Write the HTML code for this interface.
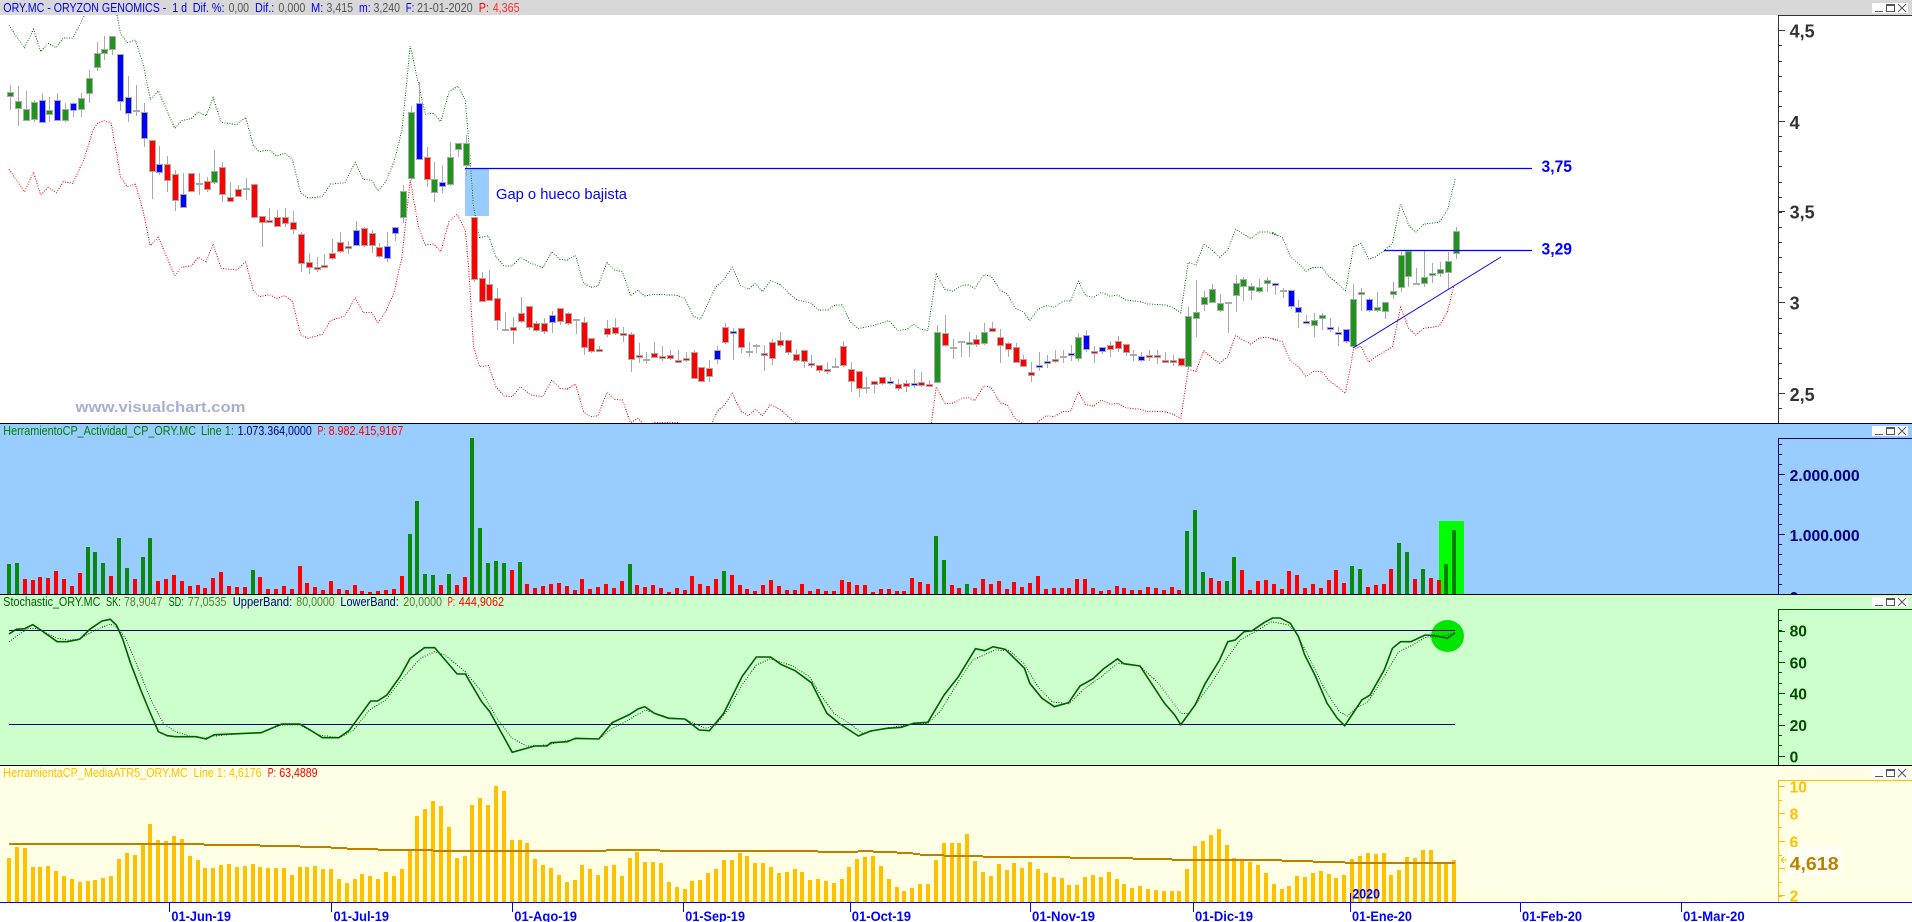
<!DOCTYPE html>
<html lang="es">
<head>
<meta charset="utf-8">
<title>ORY.MC - ORYZON GENOMICS</title>
<style>
html,body{margin:0;padding:0;background:#fff;width:1912px;height:922px;overflow:hidden}
svg{position:absolute;left:0;top:0;display:block}
text{font-family:"Liberation Sans",Arial,sans-serif;white-space:pre}
.t{font-size:12.5px}
.ax{font-weight:bold;font-size:18px}
.ax2{font-weight:bold;font-size:15.6px}
.d{font-weight:bold;font-size:13.5px;fill:#0000ff}
</style>
</head>
<body>
<svg xmlns="http://www.w3.org/2000/svg" width="1912" height="922" viewBox="0 0 1912 922">
<defs>
<clipPath id="c1"><rect x="0" y="15" width="1778" height="408"/></clipPath>
<clipPath id="c2"><rect x="0" y="424" width="1912" height="170"/></clipPath>
</defs>
<!-- backgrounds -->
<rect x="0" y="0" width="1912" height="15" fill="#d8d8d8"/>
<rect x="0" y="15" width="1912" height="408" fill="#ffffff"/>
<rect x="0" y="424" width="1912" height="170" fill="#99ccff"/>
<rect x="0" y="595" width="1912" height="170" fill="#ccffcc"/>
<rect x="0" y="766" width="1912" height="136" fill="#ffffe6"/>
<rect x="0" y="903" width="1912" height="19" fill="#ffffff"/>

<!-- price panel drawings -->
<rect x="465" y="168" width="24" height="48" fill="#99ccff"/>
<g id="bands" clip-path="url(#c1)" shape-rendering="crispEdges"></g>
<g id="candles" clip-path="url(#c1)" shape-rendering="crispEdges"></g>
<line x1="465" y1="168.5" x2="1532" y2="168.5" stroke="#0000ff" stroke-width="1.2"/>
<line x1="1384" y1="250.5" x2="1532" y2="250.5" stroke="#0000ff" stroke-width="1.2"/>
<line x1="1353" y1="348" x2="1501" y2="257" stroke="#0000ff" stroke-width="1"/>
<text x="496" y="199" font-size="15" fill="#0000ff" textLength="131" lengthAdjust="spacingAndGlyphs">Gap o hueco bajista</text>
<text x="1541.5" y="172" font-size="16.5" font-weight="bold" fill="#0000ff" textLength="30.5" lengthAdjust="spacingAndGlyphs">3,75</text>
<text x="1541.5" y="254.5" font-size="16.5" font-weight="bold" fill="#0000ff" textLength="30.5" lengthAdjust="spacingAndGlyphs">3,29</text>
<text x="75.5" y="412" font-size="15" font-weight="bold" fill="#a9aed2" textLength="170" lengthAdjust="spacingAndGlyphs">www.visualchart.com</text>

<!-- panel 2 / 3 / 4 drawings -->
<rect x="1439" y="521" width="25" height="73" fill="#00ff00"/>
<g id="vol" shape-rendering="crispEdges" clip-path="url(#c2)"></g>
<ellipse cx="1447.5" cy="636" rx="16.5" ry="16" fill="#00e600"/>
<line x1="9" y1="630.5" x2="1455" y2="630.5" stroke="#000080" stroke-width="1"/>
<line x1="9" y1="724.5" x2="1455" y2="724.5" stroke="#000080" stroke-width="1"/>
<g id="stoch"></g>
<g id="atr" shape-rendering="crispEdges"></g>

<!-- separators -->
<g shape-rendering="crispEdges">
<rect x="0" y="423" width="1912" height="1" fill="#000"/>
<rect x="0" y="594" width="1912" height="1" fill="#000"/>
<rect x="0" y="765" width="1912" height="1" fill="#000"/>
<rect x="0" y="902" width="1912" height="1" fill="#0000ff"/>
</g>

<!-- axes -->
<g id="axes" shape-rendering="crispEdges"></g>
<g class="ax" fill="#333333">
<text x="1789.6" y="37.7">4,5</text>
<text x="1789.6" y="129">4</text>
<text x="1789.6" y="218.5">3,5</text>
<text x="1789.6" y="309.7">3</text>
<text x="1789.6" y="401">2,5</text>
</g>
<g class="ax2" fill="#000080" clip-path="url(#c2)">
<text x="1789.6" y="481" textLength="70" lengthAdjust="spacingAndGlyphs">2.000.000</text>
<text x="1789.6" y="541" textLength="70" lengthAdjust="spacingAndGlyphs">1.000.000</text>
<text x="1789.6" y="603">0</text>
</g>
<g class="ax2" fill="#004d00">
<text x="1789.6" y="636.7">80</text>
<text x="1789.6" y="668.3">60</text>
<text x="1789.6" y="699.3">40</text>
<text x="1789.6" y="731">20</text>
<text x="1789.6" y="762.7">0</text>
</g>
<rect x="1779" y="766" width="133" height="14" fill="#ffffe6"/>
<g class="ax2" fill="#ffc000">
<text x="1789.6" y="792.3">10</text>
<text x="1789.6" y="819.3">8</text>
<text x="1789.6" y="847.3">6</text>
<text x="1789.6" y="901.7">2</text>
</g>
<rect x="1788" y="847" width="55" height="28" fill="#fffff6"/>
<text x="1789.6" y="870" class="ax" fill="#bf8000" textLength="49" lengthAdjust="spacingAndGlyphs">4,618</text>
<path d="M1787 860H1781M1784 857L1781 860L1784 863" stroke="#ffc000" fill="none" stroke-width="1"/>

<!-- titles -->
<g class="t" fill="#0000ff">
<text x="3.3" y="12" textLength="183.7" lengthAdjust="spacingAndGlyphs">ORY.MC - ORYZON GENOMICS -  1 d</text>
<text x="192.7" y="12" textLength="31.8" lengthAdjust="spacingAndGlyphs">Dif. %:</text>
<text x="228.6" y="12" textLength="20.4" lengthAdjust="spacingAndGlyphs" fill="#555555">0,00</text>
<text x="255" y="12" textLength="19.3" lengthAdjust="spacingAndGlyphs">Dif.:</text>
<text x="278.4" y="12" textLength="26.9" lengthAdjust="spacingAndGlyphs" fill="#555555">0,000</text>
<text x="311" y="12" textLength="12.3" lengthAdjust="spacingAndGlyphs">M:</text>
<text x="326.5" y="12" textLength="26.5" lengthAdjust="spacingAndGlyphs" fill="#555555">3,415</text>
<text x="359" y="12" textLength="11.6" lengthAdjust="spacingAndGlyphs">m:</text>
<text x="373.5" y="12" textLength="26.5" lengthAdjust="spacingAndGlyphs" fill="#555555">3,240</text>
<text x="405.7" y="12" textLength="8.6" lengthAdjust="spacingAndGlyphs">F:</text>
<text x="417" y="12" textLength="55.7" lengthAdjust="spacingAndGlyphs" fill="#555555">21-01-2020</text>
<text x="478.8" y="12" textLength="10.2" lengthAdjust="spacingAndGlyphs" fill="#ff0000">P:</text>
<text x="492.7" y="12" textLength="26.9" lengthAdjust="spacingAndGlyphs" fill="#ff3030">4,365</text>
</g>
<g class="t">
<text x="3.3" y="435" textLength="192.7" lengthAdjust="spacingAndGlyphs" fill="#008000">HerramientoCP_Actividad_CP_ORY.MC</text>
<text x="201" y="435" textLength="32.9" lengthAdjust="spacingAndGlyphs" fill="#008000">Line 1:</text>
<text x="237.6" y="435" textLength="74.2" lengthAdjust="spacingAndGlyphs" fill="#000080">1.073.364,0000</text>
<text x="317.6" y="435" textLength="8.1" lengthAdjust="spacingAndGlyphs" fill="#ff0000">P:</text>
<text x="328.6" y="435" textLength="74.7" lengthAdjust="spacingAndGlyphs" fill="#ff0000">8.982.415,9167</text>

<text x="3.3" y="606" textLength="97.1" lengthAdjust="spacingAndGlyphs" fill="#005f00">Stochastic_ORY.MC</text>
<text x="106" y="606" textLength="14.8" lengthAdjust="spacingAndGlyphs" fill="#005f00">SK:</text>
<text x="124" y="606" textLength="38.4" lengthAdjust="spacingAndGlyphs" fill="#557f33">78,9047</text>
<text x="168.6" y="606" textLength="15.1" lengthAdjust="spacingAndGlyphs" fill="#005f00">SD:</text>
<text x="187.8" y="606" textLength="38.7" lengthAdjust="spacingAndGlyphs" fill="#557f33">77,0535</text>
<text x="232.7" y="606" textLength="59.5" lengthAdjust="spacingAndGlyphs" fill="#000080">UpperBand:</text>
<text x="296.3" y="606" textLength="38.4" lengthAdjust="spacingAndGlyphs" fill="#557f33">80,0000</text>
<text x="340.4" y="606" textLength="58.4" lengthAdjust="spacingAndGlyphs" fill="#000080">LowerBand:</text>
<text x="403.3" y="606" textLength="38.7" lengthAdjust="spacingAndGlyphs" fill="#557f33">20,0000</text>
<text x="447.8" y="606" textLength="7.2" lengthAdjust="spacingAndGlyphs" fill="#ff0000">P:</text>
<text x="458.8" y="606" textLength="45.2" lengthAdjust="spacingAndGlyphs" fill="#ff0000">444,9062</text>

<text x="3.3" y="777" textLength="184.5" lengthAdjust="spacingAndGlyphs" fill="#ffc000">HerramientaCP_MediaATR5_ORY.MC</text>
<text x="193.5" y="777" textLength="32.2" lengthAdjust="spacingAndGlyphs" fill="#ffc000">Line 1:</text>
<text x="229" y="777" textLength="32.6" lengthAdjust="spacingAndGlyphs" fill="#ffc000">4,6176</text>
<text x="267.8" y="777" textLength="8.2" lengthAdjust="spacingAndGlyphs" fill="#ff0000">P:</text>
<text x="279.2" y="777" textLength="38.4" lengthAdjust="spacingAndGlyphs" fill="#ff0000">63,4889</text>
</g>

<!-- date axis -->
<g class="d">
<text x="171.4" y="921" textLength="59.6" lengthAdjust="spacingAndGlyphs">01-Jun-19</text>
<text x="333.5" y="921" textLength="55.5" lengthAdjust="spacingAndGlyphs">01-Jul-19</text>
<text x="514.3" y="921" textLength="62.7" lengthAdjust="spacingAndGlyphs">01-Ago-19</text>
<text x="685.3" y="921" textLength="59.7" lengthAdjust="spacingAndGlyphs">01-Sep-19</text>
<text x="851.8" y="921" textLength="59.2" lengthAdjust="spacingAndGlyphs">01-Oct-19</text>
<text x="1032" y="921" textLength="63" lengthAdjust="spacingAndGlyphs">01-Nov-19</text>
<text x="1195" y="921" textLength="58" lengthAdjust="spacingAndGlyphs">01-Dic-19</text>
<text x="1352" y="921" textLength="60" lengthAdjust="spacingAndGlyphs">01-Ene-20</text>
<text x="1522" y="921" textLength="60" lengthAdjust="spacingAndGlyphs">01-Feb-20</text>
<text x="1683" y="921" textLength="61.7" lengthAdjust="spacingAndGlyphs">01-Mar-20</text>
<text x="1352.4" y="898.5" textLength="27.6" lengthAdjust="spacingAndGlyphs">2020</text>
</g>
<g id="dt" shape-rendering="crispEdges"></g>
<g id="btn"></g>
</svg>

<script>
(function(){
var F=2.45,DX=7.855;
function $(i){return document.getElementById(i);}
function put(id,s){
  var tmp=document.createElementNS("http://www.w3.org/2000/svg","g");
  tmp.innerHTML=s; var g=$(id);
  while(tmp.firstChild) g.appendChild(tmp.firstChild);
}
function R(x,y,w,h,c){return '<rect x="'+x+'" y="'+y+'" width="'+w+'" height="'+h+'" fill="'+c+'"/>';}

/* candles: colour,top,bottom,high,low in zoomed y (÷3); d = doji: y,high,low */
var C="g275,292,255,330;g302,327,258,378;g328,363,272,363;g305,360,300,365;b299,369,280,369;g330,345,292,365;b299,363,280,363;g328,363,308,365;b310,333,305,350;g293,331,280,350;g235,281,210,308;g160,205,125,212;g146,163,108,180;g109,151,109,165;b163,306,163,332;b290,342,228,366;d333,255,347;b335,418,310,440;r419,517,419,597;b493,520,437,525;r493,544,468,575;r521,604,510,632;b581,625,520,625;r520,577,520,577;d553,520,585;r544,571,530,575;g512,550,450,552;r500,586,487,605;r590,607,545,607;r566,592,555,592;d566,535,600;r553,655,553,655;r647,670,647,742;r659,667,625,670;r650,681,630,681;r650,673,625,680;r665,691,633,703;r703,793,697,815;r787,805,760,822;r800,805,770,815;r794,802,762,805;r758,778,718,780;r727,757,697,760;r737,742,722,762;b691,737,663,737;r683,739,680,740;r698,739,690,760;r742,772,730,775;b739,778,697,785;b681,703,681,722;g574,655,555,668;g335,538,318,540;b308,480,247,480;r470,540,440,560;g536,580,487,605;b545,561,495,580;g472,556,425,558;g428,451,428,470;g428,498,405,527;r652,840,652,845;r833,906,815,906;r853,904,810,904;r893,963,865,990;d990,935,990;r980,994,950,1033;r940,966,890,970;r917,985,917,990;r968,993,962,995;r968,996,955,1003;b946,970,932,1000;r923,966,923,975;r940,972,935,975;d960,960,1002;r965,1044,950,1066;r1014,1055,1014,1060;r1047,1054,1038,1057;r983,1005,960,1012;r981,1002,953,1005;r998,1005,980,1025;r1002,1080,995,1117;r1065,1072,1030,1090;"+
"d1080,1055,1092;r1058,1075,1026,1075;r1067,1074,1038,1082;r1064,1078,1050,1080;r1079,1084,1050,1085;r1073,1084,1055,1085;r1057,1138,1050,1138;r1100,1147,1100,1147;r1103,1132,1080,1145;b1051,1079,1038,1092;r980,1028,968,1032;b992,997,985,1079;r983,1045,983,1060;d1056,1025,1070;d1039,1032,1058;r1058,1063,1035,1112;r1027,1078,1018,1095;r1019,1039,995,1040;r1019,1060,1019,1065;r1061,1084,1047,1085;r1049,1087,1049,1103;r1090,1099,1065,1104;r1094,1114,1094,1118;r1108,1114,1085,1122;d1100,1075,1105;r1037,1098,1023,1100;r1108,1147,1085,1175;r1112,1167,1112,1190;d1165,1130,1178;r1142,1156,1142,1178;r1130,1152,1130,1155;b1142,1150,1130,1155;r1152,1167,1137,1172;r1148,1161,1140,1175;b1148,1158,1106,1165;r1145,1158,1115,1160;r1153,1158,1140,1162;g995,1150,975,1150;r998,1039,945,1040;d1043,1018,1076;d1027,1022,1070;g1025,1030,995,1070;r1018,1036,1005,1042;g995,1033,970,1035;r983,996,965,996;r1012,1039,988,1090;r1030,1050,1025,1070;r1040,1089,1028,1090;r1077,1102,1065,1102;r1115,1128,1085,1145;b1094,1102,1055,1112;b1082,1087,1066,1103;r1076,1087,1050,1090;d1070,1050,1088;b1058,1069,1035,1082;g1010,1078,1000,1082;b1004,1051,990,1055;r1052,1057,1038,1090;b1040,1057,1040,1062;r1034,1050,1022,1070;r1022,1048,1008,1055;r1032,1060,1032,1068;d1066,1050,1082;b1068,1084,1056,1085;r1066,1075,1050,1082;r1064,1071,1050,1092;r1079,1087,1056,1087;r1081,1087,1065,1097;r1073,1099,1073,1100;g947,1101,920,1110;g935,958,840,1012;g892,916,873,933;g866,908,852,910;g908,932,882,935;d908,908,998;g848,889,825,935;g836,862,830,903;g857,874,850,900;g860,877,838,878;g839,853,830,876;b848,859,848,885;"+
"d873,865,895;b869,922,869,928;b920,940,900,985;b964,970,945,970;g959,978,940,1010;g944,958,940,990;b980,985,955,995;b997,1003,980,1037;b988,1027,988,1030;g898,1042,852,1045;g877,884,865,932;b898,933,895,935;g922,933,875,935;g905,937,905,956;g874,884,845,898;g766,865,755,875;g752,832,752,860;d852,805,855;g830,853,752,862;g818,826,790,850;g808,822,785,832;g784,820,755,868;g692,762,682,776";
var cols={g:"#1e941e",b:"#0000ff",r:"#ff0000"};
var s='',W='';
C.split(";").forEach(function(e,i){
  var k=e[0],n=e.slice(1).split(",").map(Number);
  var x=Math.round(10.2+DX*i);
  if(k=="d"){
    var y=Math.round(n[0]/3),h=Math.round(n[1]/3),l=Math.round(n[2]/3);
    W+=R(x,h,1,Math.max(l-h,1),"#aaaaaa");
    s+=R(x-3,y-1,7,2,"#aaaaaa");
  }else{
    var t=Math.round(n[0]/3),b=Math.round(n[1]/3),h2=Math.round(n[2]/3),l2=Math.round(n[3]/3);
    if(b-t<3)b=t+3;
    W+=R(x,h2,1,Math.max(l2-h2,1),"#aaaaaa");
    s+=R(x-3,t,7,b-t,"#aaaaaa")+R(x-2,t+1,5,b-t-2,cols[k]);
  }
});
put("candles",W+s);

/* dotted bands */
function pts(off,a,y0){var o=[];for(var i=0;i<a.length;i+=2)o.push((off+a[i]/F).toFixed(1)+","+(y0+a[i+1]/3).toFixed(1));return o.join(" ");}
var gu1=[22,75,40,110,60,143,82,88,100,155,118,130,138,143,155,113,178,115,205,50,225,-10,270,-10,287,45,295,100,312,128,332,120,350,190,368,298,388,273,428,385,445,362,470,355,485,335,505,348,522,293,542,367,580,374,602,352,620,435,635,455,660,450,678,468,697,460,716,476,737,580,755,594,790,590,810,552,845,548,870,487,890,538,910,540,926,572,945,545,965,487,985,390,1005,138,1025,250,1042,342,1062,340,1080,365,1100,275,1122,258,1140,300,1148,420,1160,620,1175,712,1197,708,1215,770,1235,798,1255,798,1275,772,1300,790,1330,803,1352,755,1372,778,1390,780,1410,766,1430,850,1448,862,1465,858,1487,787,1506,810,1525,815,1545,888,1563,870];
var gu2=[0,877,12,888,35,883,60,884,90,886,110,895,130,948,148,958,165,915,185,862,205,840,226,802,247,857,265,868,283,850,300,875,320,842,345,855,365,880,385,900,418,908,437,930,460,930,478,915,495,915,515,965,535,986,570,977,610,962,632,992,655,987,670,973,688,988,705,992,726,823,747,868,765,874,790,856,805,855,820,865,842,825,860,828,882,870,900,882,920,925,940,937,955,962,975,928,995,917,1015,922,1036,904,1055,903,1074,844,1092,887,1112,892,1131,877,1152,889,1170,885,1190,900,1225,905,1245,912,1285,915,1305,922,1325,938,1343,787,1362,796,1381,733,1400,748,1420,772,1440,750,1459,688,1497,716,1516,697,1536,695,1563,708];
var gu3=[0,697,25,712,45,770,65,790,83,814,100,802,122,802,140,830,160,850,180,872,200,740,218,730,237,777,255,770,275,752,295,730,315,612,335,675,352,697,372,672,392,670,410,666,430,630,449,537];
var rd1=[22,508,40,540,60,575,82,517,100,585,118,562,138,578,155,545,178,550,205,480,228,390,240,368,255,362,272,367,287,470,295,530,312,560,332,553,350,630,368,737,388,712,428,827,445,802,470,797,485,772,505,785,522,732,542,805,580,810,602,785,620,870,635,890,660,884,678,895,697,887,716,903,737,1005,755,1015,790,1003,810,962,845,948,870,893,890,938,910,937,926,968,945,935,965,880,985,770,1005,540,1025,680,1042,735,1062,732,1080,755,1100,665,1120,643,1140,690,1148,800,1160,1040,1175,1100,1197,1097,1215,1160,1235,1188,1255,1190,1275,1160,1300,1185,1330,1190,1352,1140,1372,1165,1390,1167,1410,1152,1430,1237,1448,1250,1465,1247,1487,1177,1506,1198,1525,1200,1545,1268,1563,1255];
var rd2=[0,1262,12,1275,35,1268,92,1268,110,1290,160,1290,176,1270,190,1232,205,1218,226,1180,247,1233,265,1247,283,1228,300,1247,320,1213,345,1230,380,1268,400,1295,700,1295,714,1268,726,1160,747,1210,765,1210,790,1195,805,1193,820,1202,842,1158,860,1162,882,1208,900,1215,920,1258,940,1270,955,1295,970,1270,995,1247,1015,1250,1036,1234,1055,1234,1074,1175,1092,1215,1112,1218,1131,1200,1152,1213,1170,1210,1190,1223,1225,1228,1245,1235,1285,1235,1305,1242,1325,1256,1343,1108,1362,1114,1381,1052,1400,1072,1420,1090,1440,1070,1459,1007,1497,1033,1516,1015,1536,1012,1563,1022];
var rd3=[0,1015,25,1025,45,1083,65,1100,83,1130,100,1114,122,1114,140,1142,160,1160,180,1180,200,1050,218,1038,237,1087,255,1070,275,1055,295,1040,315,922,335,985,352,1005,372,985,392,982,410,978,430,935,445,860];
function dot(p,c,w){return '<polyline points="'+p+'" fill="none" stroke="'+c+'" stroke-width="'+(w||1)+'" stroke-dasharray="1 1.5"/>';}
put("bands",
 dot(pts(0,gu1,0)+" "+pts(640,gu2,0)+" "+pts(1272,gu3,0),"#008000",1)+
 dot(pts(0,rd1,0)+" "+pts(640,rd2,0)+" "+pts(1272,rd3,0),"#ff0000",1));

/* stochastic */
var k1=[22,642,40,628,60,626,80,614,100,630,140,665,165,665,195,658,220,628,250,603,270,598,285,615,300,655,320,730,345,810,365,870,388,935,410,947,430,950,480,950,505,957,525,944,585,941,640,938,690,912,735,912,760,930,790,953,830,953,855,932,880,890,908,843,925,843,948,825,980,770,1005,715,1040,683,1065,683,1120,762,1140,762,1180,845,1200,875,1255,997,1310,978,1340,978,1350,968,1390,965,1410,955,1467,957,1500,908,1540,885,1563,867];
var k2=[0,865,12,860,35,880,70,895,110,897,145,930,170,932,205,880,250,770,285,711,320,711,345,733,380,752,420,788,458,880,490,912,535,948,565,933,605,925,640,922,670,910,705,907,745,825,780,770,822,686,845,692,865,680,895,688,942,745,955,790,985,835,1015,860,1050,848,1078,798,1110,776,1135,747,1170,716,1185,731,1225,738,1285,850,1310,885,1325,914,1360,855,1385,790,1420,720,1440,665,1458,660,1480,635,1500,632,1530,607,1550,594];
var k3=[0,594,20,594,45,610,65,650,80,705,105,765,135,850,160,895,178,917,220,840,240,825,275,750,295,685,315,665,340,665,375,645,400,647,430,655,448,638];
var d1=[22,665,45,645,70,625,90,625,140,655,170,660,195,657,230,632,270,612,290,625,310,660,340,750,370,840,400,910,430,935,470,950,500,955,525,948,585,941,640,938,690,915,735,915,780,945,830,953,865,932,905,870,945,840,990,770,1030,715,1065,695,1090,705,1140,755,1180,815,1220,900,1255,955,1290,978,1340,975,1410,957,1467,957,1500,925,1540,900,1563,882];
var d2=[0,880,12,870,70,893,110,897,160,925,185,915,215,870,250,795,285,735,320,716,375,738,415,770,440,820,475,880,510,908,545,940,605,924,670,912,705,910,735,875,785,775,815,720,870,690,905,692,940,730,975,800,1010,845,1050,852,1090,805,1130,770,1170,730,1225,738,1270,790,1325,880,1345,880,1400,790,1430,730,1470,660,1515,630,1540,610];
var d3=[0,605,40,615,60,640,90,710,130,810,165,875,185,888,205,865,235,845,275,770,310,695,345,675,375,652,410,650,448,640];
put("stoch",
 '<g shape-rendering="crispEdges">'+dot(pts(0,d1,420)+" "+pts(640,d2,420)+" "+pts(1272,d3,420),"#006000",1)+'</g>'+
 '<polyline points="'+pts(0,k1,420)+" "+pts(640,k2,420)+" "+pts(1272,k3,420)+'" fill="none" stroke="#005f00" stroke-width="1.6"/>');

/* volume */
var V="432g,429g,477,480,471,474,453,477,498,459,381g,396g,429g,468,354g,444g,477,411g,354g,483,477,465,483,498,495,504,474,456,498,501,501,450g,471,507,507,498,507,438,489,501,510,483,507,510,495,513,516,513,510,507,468,342g,243g,462g,465g,495,462g,495,471,54g,324g,429g,423g,429g,450,426g,492,504,498,492,489,498,510,477,507,501,492,504,483,432g,495,"+
"501,495,504,516,504,510,468,492,498,477,453g,465,495,507,513,495,480,498,510,510,492,513,507,513,513,480,486,495,495,516,507,507,513,513,474,486,492,348g,420g,495,504,492g,504,477,492,483,507,486,501,489,468,507,504,504,504,477,477,504,513,510,498,504,510,510,501,504,510,501,510,333g,270g,456g,474,483,483g,411g,450,510,483,480,492,"+
"507,453,465,504,492,504,480,450,489,438g,447g,501,495,492,447,369g,396g,477,447g,474,480,432g,330g";
var vs='';
V.split(",").forEach(function(e,i){
  var g=e.slice(-1)=="g",v=parseInt(e,10),c=Math.round(9+DX*i-2),t=Math.round(420+v/3);
  vs+=R(c,t,4,594-t,i>=183?"#0a7a0a":(g?"#0a8a0a":"#ff0000"));
});
put("vol",vs);

/* ATR bars */
var A=[294,261,264,321,321,318,333,348,357,366,363,360,354,348,297,279,285,252,192,240,243,228,237,288,300,324,324,315,312,321,318,312,321,324,324,324,345,321,321,318,327,327,357,369,357,342,348,357,336,348,327,270,168,147,123,138,201,294,288,135,114,135,78,93,240,240,249,297,315,324,345,366,360,315,327,345,318,315,348,294,276,
306,306,309,366,381,387,363,360,339,327,300,300,279,288,309,309,321,339,336,327,336,360,357,363,369,357,321,297,291,288,318,357,381,393,384,372,372,300,249,249,249,222,303,336,348,312,330,309,324,306,327,339,351,354,375,375,351,345,351,336,357,372,384,378,387,390,393,393,393,327,258,243,225,207,255,294,300,306,315,339,372,
387,378,348,351,339,333,342,354,345,297,288,279,282,279,345,330,291,294,270,270,309,309,300];
var as='';
A.forEach(function(v,i){var c=Math.round(9+DX*i-2),t=Math.round(760+v/3);as+=R(c,t,4,902-t,"#ffc000");});
/* MA step line */
var M=[[0,22,500,252],[0,500,637,255],[0,637,735,258],[0,735,811,261],[0,811,850,264],[0,850,926,267],[0,926,1060,270],[0,1060,1485,273],[0,1485,1568,270],
[640,0,50,270],[640,50,436,273],[640,436,535,276],[640,535,570,273],[640,570,630,276],[640,630,670,279],[640,670,686,282],[640,686,745,285],[640,745,840,288],[640,840,1053,291],[640,1053,1208,294],[640,1208,1303,297],[640,1303,1568,300],
[1272,0,24,300],[1272,24,100,303],[1272,100,180,306],[1272,180,448,309]];
M.forEach(function(m){var a=Math.round(m[0]+m[1]/F),b=Math.round(m[0]+m[2]/F),y=Math.round(760+m[3]/3);as+=R(a,y-1,b-a,2,"#bf8000");});
put("atr",as);

/* axes */
function axis(col,top,bot,ticks,majors,minLen,majLen){
  var o=R(1778,top,1,bot-top,col)+R(1778,top,134,1,col);
  ticks.forEach(function(y){o+=R(1778,Math.round(y),minLen,1,col);});
  majors.forEach(function(y){o+=R(1778,Math.round(y),majLen,1,col);});
  return o;
}
function seq(a,st,n){var r=[];for(var i=0;i<n;i++)r.push(a+st*i);return r;}
var ax='';
ax+=axis("#333333",15,423,seq(30.3,15.12,26),[30.3,121,211,302,393],4,7);
ax+=axis("#000080",438,594,seq(444.3,10,16),[474.3,534.3],4,7);
ax+=axis("#004d00",609,765,seq(620,10.45,14),[630.7,661.7,693.3,724.7,756],4,7);
ax+=axis("#ffc000",780,902,seq(786,13.7,9),[786,813.3,841,868,895.3],4,7);
put("axes",ax);

/* date ticks */
var dt='';
[169,331,512,683,850,1030,1193,1520,1681].forEach(function(x){dt+=R(x,902,1,10,"#0000ff");});
dt+=R(1350,893,1,19,"#0000ff");
put("dt",dt);

/* window buttons */
var bt='';
[3,426,597,768].forEach(function(y){
  bt+='<rect x="1872" y="'+y+'" width="36" height="10" fill="#ffffff"/>';
  bt+='<path d="M1875 '+(y+8.5)+'H1883" stroke="#555" stroke-width="1" shape-rendering="crispEdges"/>';
  bt+='<path d="M1886.5 '+(y+1.5)+'H1894.5V'+(y+8.5)+'H1886.5Z M1886.5 '+(y+2.5)+'H1894.5" stroke="#555" stroke-width="1" fill="none" shape-rendering="crispEdges"/>';
  bt+='<path d="M1898 '+(y+1)+'L1906 '+(y+9)+'M1906 '+(y+1)+'L1898 '+(y+9)+'" stroke="#555" stroke-width="1" fill="none"/>';
});
put("btn",bt);
})();
</script>
</body>
</html>
